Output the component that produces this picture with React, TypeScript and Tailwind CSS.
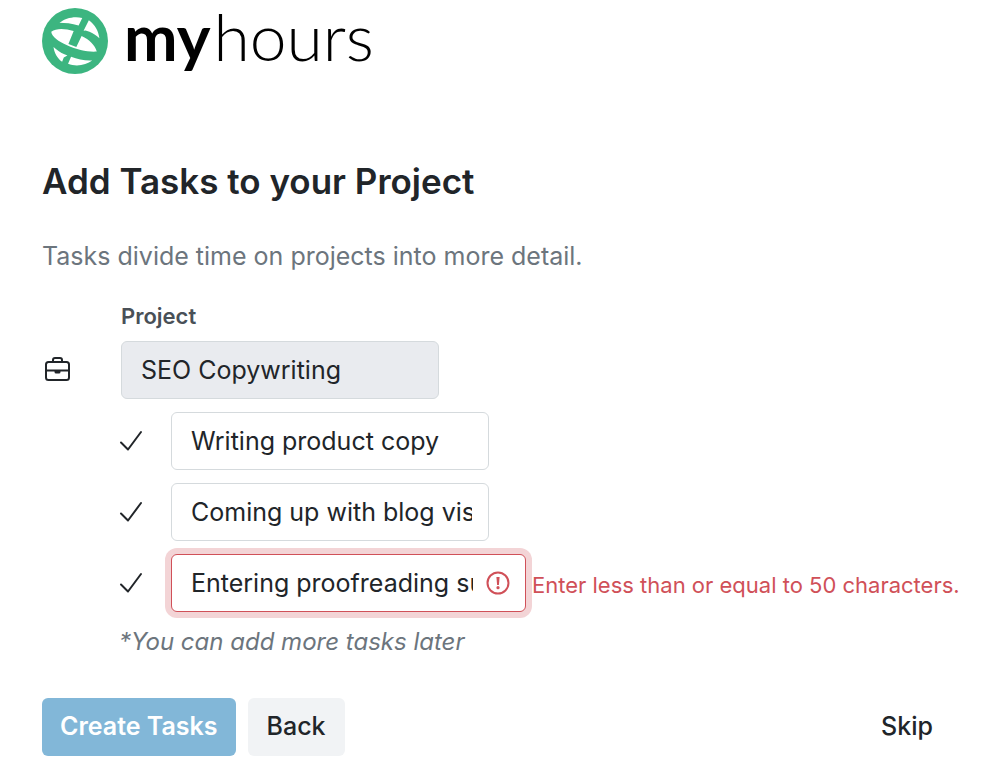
import React, { useState } from 'react';
import { clsx } from 'clsx';

const MAX_LENGTH = 50;

const Logo = () => (
  <div className="flex items-center gap-4">
    <svg viewBox="22 18 200 200" className="w-[66px] h-[66px]" aria-hidden="true">
      <circle cx="122" cy="118" r="100" fill="#3cb580" />
      <g fill="#fff">
        <path d="M75 63C92 49 118 42 144 48L133 71C112 65 92 63 75 63Z" />
        <path d="M164 55C183 68 193 88 196 110C187 101 176 94 166 90L154 86L148 87Z" />
        <path d="M50 90C66 78 92 80 118 88L102 127L126 136L142 103C166 114 182 130 188 150C162 152 128 145 98 131C72 119 52 106 50 90Z" />
        <path d="M57 136C68 146 78 153 90 158L99 162L88 168L83 181C68 170 59 154 57 136Z" />
        <path d="M110 166C130 174 152 178 174 177C156 191 126 197 101 187Z" />
      </g>
    </svg>
    <div className="flex items-baseline gap-[3px] pb-2 font-['Lato'] leading-[64px] text-black">
      <span className="text-[64px] font-bold">my</span>
      <span className="text-[66px] font-light">hours</span>
    </div>
  </div>
);

const BriefcaseIcon = () => (
  <svg viewBox="0 0 32 32" className="w-8 h-8" fill="none" stroke="#212529" strokeWidth="2" aria-hidden="true">
    <rect x="4" y="8" width="23" height="18" rx="2.500" />
    <path d="M11 8V6a2 2 0 0 1 2-2h5a2 2 0 0 1 2 2V8M4 16.500h23" />
    <path d="M12.500 16.500h6v1.500a1.500 1.500 0 0 1-1.500 1.500h-3a1.500 1.500 0 0 1-1.500-1.500Z" fill="#212529" stroke="none" />
  </svg>
);

const CheckIcon = () => (
  <svg viewBox="0 0 24 24" className="w-6 h-6 shrink-0" fill="none" stroke="#212529" strokeWidth="2" strokeLinecap="round" strokeLinejoin="round" aria-hidden="true">
    <path d="M2 13.500L9 20.500L22 3" />
  </svg>
);

const AlertIcon = () => (
  <svg viewBox="0 0 24 24" className="w-6 h-6" fill="none" stroke="#d05058" strokeWidth="2" aria-hidden="true">
    <circle cx="12" cy="12" r="10.500" />
    <path d="M10.400 6h3.200l-.7 8h-1.800Z" fill="#d05058" stroke="none" />
    <circle cx="12" cy="16.700" r="1.600" fill="#d05058" stroke="none" />
  </svg>
);

interface TaskRowProps {
  index: number;
  value: string;
  onChange: (value: string) => void;
}

const TaskRow = ({ index, value, onChange }: TaskRowProps) => {
  const invalid = value.length > MAX_LENGTH;

  return (
    <div className="flex items-center">
      <CheckIcon />
      <div className={clsx('relative ml-7 shrink-0', invalid ? 'w-[355px]' : 'w-[318px]')}>
        <input
          type="text"
          aria-label={`Task ${index + 1}`}
          aria-invalid={invalid}
          value={value}
          onChange={(e) => onChange(e.target.value)}
          className={clsx(
            'block w-full h-[58px] rounded-md border bg-white pl-[19px] text-[25px] text-[#212529] outline-none',
            invalid
              ? 'pr-[52px] border-[#d05058] ring-[6px] ring-[#f3d4d6]'
              : 'pr-4 border-[#d5dadd]'
          )}
        />
        {invalid && (
          <span className="absolute inset-y-0 right-4 flex items-center pointer-events-none">
            <AlertIcon />
          </span>
        )}
      </div>
      {invalid && (
        <p role="alert" className="ml-[6px] pt-1 text-[22px] leading-7 whitespace-nowrap text-[#d05058]">
          Enter less than or equal to 50 characters.
        </p>
      )}
    </div>
  );
};

const App = () => {
  const [tasks, setTasks] = useState([
    'Writing product copy',
    'Coming up with blog visuals',
    'Entering proofreading suggestions from the editorial team',
  ]);

  const updateTask = (index: number, value: string) => {
    setTasks(tasks.map((task, i) => (i === index ? value : task)));
  };

  return (
    <main className="px-[42px] pt-1 font-['Inter',sans-serif] text-[#212529]">
      <Logo />

      <h1 className="mt-[82px] text-[35px] leading-11 font-semibold">Add Tasks to your Project</h1>
      <p className="mt-[37px] text-[25px] leading-8 text-[#6c757d]">
        Tasks divide time on projects into more detail.
      </p>

      <form onSubmit={(e) => e.preventDefault()}>
        <div className="mt-7 ml-[79px]">
          <label htmlFor="project" className="block text-[22px] leading-8 font-semibold text-[#495057]">
            Project
          </label>
        </div>
        <div className="mt-[9px] flex items-center">
          <span className="w-[79px]">
            <BriefcaseIcon />
          </span>
          <input
            id="project"
            type="text"
            disabled
            value="SEO Copywriting"
            className="w-[318px] h-[58px] rounded-md border border-[#d5dadd] bg-[#e9ebef] px-[19px] text-[25px] text-[#212529]"
          />
        </div>

        <div className="mt-[13px] ml-[77px] flex flex-col gap-[13px]">
          {tasks.map((task, index) => (
            <TaskRow key={index} index={index} value={task} onChange={(value) => updateTask(index, value)} />
          ))}
        </div>

        <p className="mt-[14px] ml-[77px] text-[24px] leading-8 italic text-[#6c757d]">
          *You can add more tasks later
        </p>

        <div className="mt-10 flex items-center gap-3">
          <button type="submit" className="h-[58px] rounded-md bg-[#82b7d8] px-[18px] text-[25px] font-semibold text-white">
            Create Tasks
          </button>
          <button type="button" className="h-[58px] rounded-md bg-[#f1f3f5] px-[19px] text-[25px] font-medium">
            Back
          </button>
          <button type="button" className="ml-auto h-[58px] px-[25px] text-[25px] font-medium">
            Skip
          </button>
        </div>
      </form>
    </main>
  );
};

export default App;
